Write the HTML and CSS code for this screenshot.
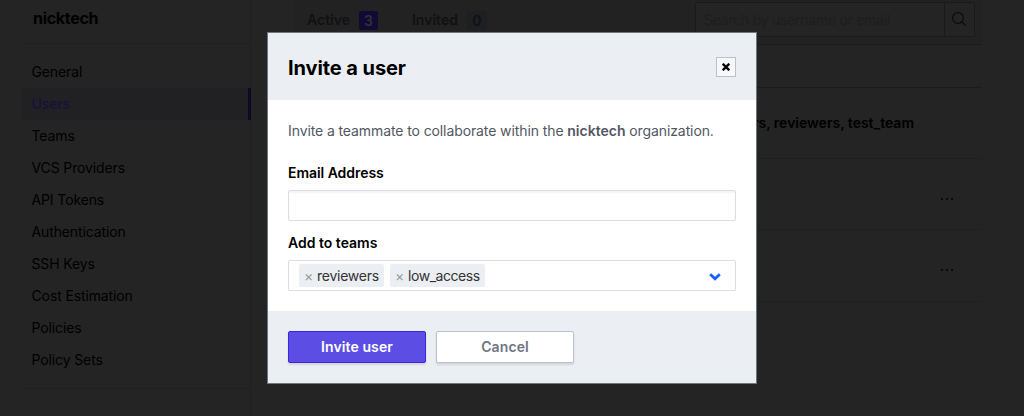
FILE: index.html
```
<!DOCTYPE html>
<html lang="en">
<head>
<meta charset="utf-8">
<title>Users | nicktech</title>
<link rel="stylesheet" href="styles.css">
</head>
<body>
<div class="page">
  <aside class="sidebar">
    <h2 class="org">nicktech</h2>
    <nav class="nav">
      <a class="nav-item">General</a>
      <a class="nav-item active">Users</a>
      <a class="nav-item">Teams</a>
      <a class="nav-item">VCS Providers</a>
      <a class="nav-item">API Tokens</a>
      <a class="nav-item">Authentication</a>
      <a class="nav-item">SSH Keys</a>
      <a class="nav-item">Cost Estimation</a>
      <a class="nav-item">Policies</a>
      <a class="nav-item">Policy Sets</a>
    </nav>
  </aside>
  <main class="main">
    <div class="toolbar">
      <div class="tab">Active <span class="count count-on">3</span></div>
      <div class="tab">Invited <span class="count">0</span></div>
      <div class="search">
        <span class="search-text">Search by username or email</span>
        <span class="search-button">
          <svg width="16" height="16" viewBox="0 0 16 16" fill="none" stroke="#0c0c0c" stroke-width="1.3"><circle cx="7" cy="7" r="5.4"/><path d="M11 11l3.6 3.6"/></svg>
        </span>
      </div>
    </div>
    <div class="head-row"></div>
    <div class="row"><strong class="teams">owners, reviewers, test_team</strong></div>
    <div class="row"><span class="dots"><i></i><i></i><i></i></span></div>
    <div class="row last"><span class="dots"><i></i><i></i><i></i></span></div>
  </main>
</div>
<section class="modal">
  <header class="modal-header">
    <h1 class="modal-title">Invite a user</h1>
    <button class="close" aria-label="Close">
      <svg width="8" height="8" viewBox="0 0 8 8" stroke="#000" stroke-width="2.3"><path d="M.7.7l6.6 6.6M7.3.7L.7 7.3"/></svg>
    </button>
  </header>
  <div class="modal-body">
    <p class="intro">Invite a teammate to collaborate within the <strong>nicktech</strong> organization.</p>
    <label class="label">Email Address</label>
    <input class="input" type="text">
    <label class="label label-teams">Add to teams</label>
    <div class="select">
      <span class="tag"><span class="x">×</span>reviewers</span>
      <span class="tag tag-low"><span class="x">×</span>low_access</span>
      <svg class="chevron" width="12" height="8" viewBox="0 0 12 8" fill="none" stroke="#1563ff" stroke-width="2.8"><path d="M1.2 1.2L6 5.8l4.8-4.6"/></svg>
    </div>
  </div>
  <footer class="modal-footer">
    <button class="button primary">Invite user</button>
    <button class="button">Cancel</button>
  </footer>
</section>
</body>
</html>
```
FILE: styles.css
```
* { box-sizing: border-box; }
body {
  margin: 0;
  height: 416px;
  overflow: hidden;
  background: #242424;
  color: #000;
  font: 14px/20px Inter, "Liberation Sans", sans-serif;
}
.page { display: flex; gap: 42px; height: 416px; padding-left: 21px; }
.sidebar { width: 230px; border-right: 1px solid #202020; }
.org {
  margin: 0;
  height: 44px;
  padding: 8px 0 0 12px;
  border-bottom: 1px solid #202020;
  font-size: 16px;
  line-height: 21px;
  font-weight: 650;
  letter-spacing: -0.3px;
}
.nav { padding: 12px 0; height: 345px; border-bottom: 1px solid #202020; }
.nav-item {
  display: block;
  height: 32px;
  padding-left: 10.5px;
  line-height: 32px;
  letter-spacing: -0.12px;
}
.nav-item.active {
  margin-right: -1px;
  background: #212124;
  border-right: 3px solid #0e0827;
  color: #191139;
  font-weight: 500;
}
.main { width: 689px; }
.toolbar {
  display: flex;
  height: 45px;
  padding: 2px 7px 0 14px;
  background: #222;
  border-bottom: 1px solid #1b1b1b;
}
.tab {
  display: flex;
  align-items: center;
  gap: 9px;
  height: 36px;
  margin-right: 34px;
  color: #101113;
  font-weight: 600;
}
.count {
  width: 20px;
  height: 19px;
  border-radius: 2px;
  background: #1e1f22;
  line-height: 19px;
  text-align: center;
}
.count-on { width: 19px; background: #100a34; color: #303036; }
.search {
  display: flex;
  width: 280px;
  height: 35px;
  margin-left: auto;
  border: 1px solid #1a1a1a;
  border-radius: 2px;
  background: #242424;
}
.search-text { flex: 1; padding-left: 8px; line-height: 34px; color: #1e1e1e; letter-spacing: -0.25px; }
.search-button {
  display: flex;
  width: 30px;
  padding: 8px 0 0 6px;
  border-left: 1px solid #1a1a1a;
}
.head-row { height: 43px; border-bottom: 1px solid #1b1b1b; }
.row {
  display: flex;
  align-items: center;
  justify-content: flex-end;
  height: 71px;
  border-bottom: 1px solid #202020;
}
.row.last { height: 72px; }
.teams { margin-right: 68px; font-weight: 600; }
.dots { display: flex; gap: 3px; margin: 9px 29px 0 0; }
.dots i { width: 2px; height: 2px; background: #0a0a0a; }
.modal {
  position: fixed;
  left: 267px;
  top: 32px;
  display: flex;
  flex-direction: column;
  width: 490px;
  height: 352px;
  border: 1px solid #6f7682;
  background: #fff;
}
.modal-header {
  display: flex;
  align-items: center;
  justify-content: space-between;
  height: 67px;
  padding: 1px 20px 0;
  background: #ebeef2;
}
.modal-title { margin: 2px 0 0; font-size: 20px; line-height: 28px; font-weight: 700; letter-spacing: -0.08px; }
.close {
  display: flex;
  align-items: center;
  justify-content: center;
  width: 20px;
  height: 20px;
  padding: 0;
  border: 1px solid #bac1cc;
  background: #f7f8fa;
}
.modal-body { display: flex; flex-direction: column; height: 211px; padding: 21px 20px 0; }
.intro { margin: 0; color: #525761; white-space: nowrap; letter-spacing: -0.1px; }
.intro strong { font-weight: 600; letter-spacing: 0; }
.label { margin-top: 22px; font-weight: 600; letter-spacing: -0.05px; }
.input {
  height: 31px;
  margin-top: 7px;
  border: 1px solid #dcdee4;
  border-radius: 2px;
  background: #fff;
  box-shadow: inset 0 2px 2px rgba(186, 193, 204, .2);
}
.label-teams { margin-top: 12px; letter-spacing: 0; }
.select {
  display: flex;
  align-items: center;
  gap: 6px;
  height: 31px;
  margin-top: 7px;
  padding: 0 14px 0 10px;
  border: 1px solid #dcdee4;
  border-radius: 2px;
}
.tag {
  display: flex;
  align-items: center;
  width: 85px;
  height: 23px;
  padding-left: 5px;
  border-radius: 2px;
  background: #ebeef2;
  color: #333;
  letter-spacing: -0.25px;
}
.tag-low { width: 95px; letter-spacing: -0.45px; }
.x { width: 13px; color: #999; font-size: 14px; }
.chevron { margin: 3px 0 0 auto; }
.modal-footer { display: flex; gap: 10px; height: 72px; padding: 20px; background: #ebeef2; }
.button {
  width: 138px;
  height: 32px;
  padding: 0;
  border: 1px solid #bac1cc;
  border-radius: 2px;
  background: #fff;
  box-shadow: 0 2px 2px rgba(111, 118, 130, .2);
  color: #6f7682;
  font: 600 14px/28px Inter, "Liberation Sans", sans-serif;
  letter-spacing: 0.1px;
}
.primary { border-color: #3d25dd; background: #5c4ee5; color: #fff; }
```
